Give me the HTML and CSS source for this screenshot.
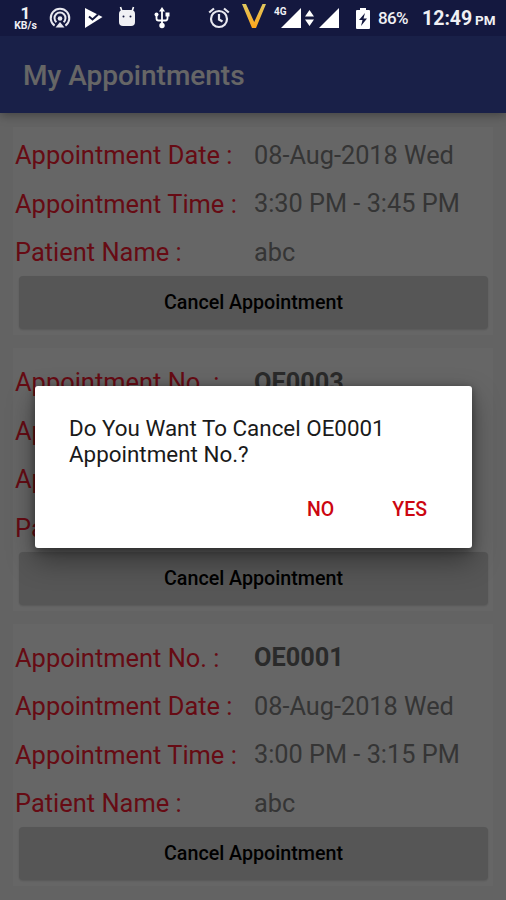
FILE: index.html
```html
<!DOCTYPE html>
<html lang="en">
<head>
    <meta charset="UTF-8">
    <meta name="viewport" content="width=device-width, initial-scale=1.0">
    <title>My Appointments</title>
    <link rel="stylesheet" href="styles.css">
</head>
<body>
    <div class="status-bar">
        <div class="speed">
            <span class="speed-value">1</span>
            <span class="speed-unit">KB/s</span>
        </div>
        <svg class="icon-cast" width="22" height="22" viewBox="0 0 22 22" fill="none" stroke="#e8e8f0" stroke-width="2">
            <path d="M5.600 18.600a9.300 9.300 0 1 1 10.800 0"/>
            <path d="M7.400 15.200a5.500 5.500 0 1 1 7.200 0"/>
            <circle cx="11" cy="11.500" r="2.300" fill="#e8e8f0" stroke="none"/>
            <path d="M6.500 20.500 11 15l4.500 5.500z" fill="#e8e8f0" stroke="none"/>
        </svg>
        <svg class="icon-play" width="19" height="20" viewBox="0 0 19 20">
            <path d="M1 0 18.500 9 1 20z" fill="#fff"/>
            <path d="M5 8.500 8.500 11.500 14 6.500" fill="none" stroke="#14183f" stroke-width="2"/>
        </svg>
        <svg class="icon-android" width="18" height="21" viewBox="0 0 18 21">
            <path d="M2.500 1 4 5.500M15.500 1 14 5.500" stroke="#fff" stroke-width="1.600"/>
            <path d="M1 8Q1 4 5 4h8q4 0 4 4v8q0 4-4 4H5q-4 0-4-4z" fill="#f0f0f4"/>
            <circle cx="5.500" cy="10.500" r="1" fill="#14183f"/>
            <circle cx="12.500" cy="10.500" r="1" fill="#14183f"/>
        </svg>
        <svg class="icon-usb" width="16" height="22" viewBox="0 0 16 22" fill="none" stroke="#fff" stroke-width="1.800">
            <path d="M8 3v15M2.500 8v3.500q0 2 2 2H8M13.500 7v4q0 2.500-2 2.500H8"/>
            <path d="M8 0 5 4.500h6z" fill="#fff" stroke="none"/>
            <circle cx="2.500" cy="7.500" r="2" fill="#fff" stroke="none"/>
            <path d="M11.500 5.500h4v4h-4z" fill="#fff" stroke="none"/>
            <circle cx="8" cy="18.500" r="2.700" fill="#fff" stroke="none"/>
        </svg>
        <svg class="icon-alarm" width="22" height="22" viewBox="0 0 22 22" fill="none" stroke="#e8e8f0" stroke-width="2.200">
            <circle cx="11" cy="12" r="8"/>
            <path d="M11 7v5.500l3.500 2"/>
            <path d="M1.200 5.500 6 1.500M20.800 5.500 16 1.500"/>
        </svg>
        <svg class="icon-v" width="24" height="26" viewBox="0 0 24 26">
            <defs>
                <linearGradient id="gold" x1="0" y1="0" x2="0" y2="1">
                    <stop offset="0" stop-color="#e0c860"/>
                    <stop offset="1" stop-color="#ffa51a"/>
                </linearGradient>
            </defs>
            <path d="M0 1h4l8.200 18L20.500 1H24L14 25h-4z" fill="url(#gold)"/>
        </svg>
        <div class="network">
            <span class="network-type">4G</span>
            <svg width="20" height="20" viewBox="0 0 20 20"><path d="M20 0v20H0z" fill="#fff"/></svg>
        </div>
        <svg class="icon-data" width="9" height="16" viewBox="0 0 9 16">
            <path d="M4.500 0 9 6.500H0zM4.500 16 9 9.500H0z" fill="#fff"/>
        </svg>
        <svg class="icon-signal" width="20" height="20" viewBox="0 0 20 20"><path d="M20 0v20H0z" fill="#fff"/></svg>
        <svg class="icon-battery" width="14" height="21" viewBox="0 0 14 21">
            <path d="M4 0h6v2h3q1 0 1 1v17q0 1-1 1H1q-1 0-1-1V3q0-1 1-1h3z" fill="#fff"/>
            <path d="M9 5 3 12h3.500L5 18l6-7.500H7.500z" fill="#14183f"/>
        </svg>
        <span class="battery-text">86%</span>
        <span class="clock">12:49</span>
        <span class="clock-suffix">PM</span>
    </div>
    <header class="app-bar">
        <h1 class="title">My Appointments</h1>
    </header>
    <main class="content">
        <div class="list">
            <div class="card card-first">
                <div class="row"><span class="label">Appointment Date :</span><span class="value">08-Aug-2018 Wed</span></div>
                <div class="row"><span class="label">Appointment Time :</span><span class="value">3:30 PM - 3:45 PM</span></div>
                <div class="row"><span class="label">Patient Name :</span><span class="value">abc</span></div>
                <button class="cancel-button">Cancel Appointment</button>
            </div>
            <div class="card">
                <div class="row"><span class="label">Appointment No. :</span><span class="value number">OE0003</span></div>
                <div class="row"><span class="label">Appointment Date :</span></div>
                <div class="row"><span class="label">Appointment Time :</span></div>
                <div class="row"><span class="label">Patient Name :</span></div>
                <button class="cancel-button">Cancel Appointment</button>
            </div>
            <div class="card">
                <div class="row"><span class="label">Appointment No. :</span><span class="value number">OE0001</span></div>
                <div class="row"><span class="label">Appointment Date :</span><span class="value">08-Aug-2018 Wed</span></div>
                <div class="row"><span class="label">Appointment Time :</span><span class="value">3:00 PM - 3:15 PM</span></div>
                <div class="row"><span class="label">Patient Name :</span><span class="value">abc</span></div>
                <button class="cancel-button">Cancel Appointment</button>
            </div>
        </div>
    </main>
    <div class="overlay">
        <div class="dialog">
            <p class="message">Do You Want To Cancel OE0001<br>Appointment No.?</p>
            <div class="actions">
                <button class="dialog-button">NO</button>
                <button class="dialog-button">YES</button>
            </div>
        </div>
    </div>
</body>
</html>
```
FILE: styles.css
```css
* {
    box-sizing: border-box;
}

body {
    margin: 0;
    width: 506px;
    height: 900px;
    display: flex;
    flex-direction: column;
    overflow: hidden;
    font-family: Roboto, sans-serif;
    background-color: #f7f7f7;
}

button {
    border: none;
    font-family: inherit;
    cursor: pointer;
}

/* status bar, stays above the overlay */
.status-bar {
    height: 36px;
    flex: none;
    display: flex;
    align-items: center;
    padding-left: 13px;
    color: #f0f0f4;
    background-color: #14183f;
    position: relative;
    z-index: 3;
}

.speed {
    width: 25px;
    display: flex;
    flex-direction: column;
    align-items: center;
    font-weight: bold;
}

.speed-value {
    font-size: 17px;
    line-height: 14px;
}

.speed-unit {
    font-size: 10.5px;
    line-height: 11px;
}

.icon-cast {
    margin-left: 11px;
}

.icon-play {
    margin-left: 13px;
}

.icon-android {
    margin-left: 15px;
    margin-bottom: 4px;
}

.icon-usb {
    margin-left: 18px;
}

.icon-alarm {
    margin-left: 38px;
}

.icon-v {
    margin-left: 12px;
    margin-bottom: 4px;
}

.network {
    margin-left: 8px;
    width: 27px;
    height: 20px;
    display: flex;
    justify-content: flex-end;
    position: relative;
}

.network-type {
    position: absolute;
    left: 0;
    top: -1px;
    font-size: 10px;
    line-height: 10px;
    font-weight: bold;
}

.icon-data {
    margin-left: 4px;
}

.icon-signal {
    margin-left: 5px;
}

.icon-battery {
    margin-left: 17px;
}

.battery-text {
    margin-left: 8px;
    width: 44px;
    font-size: 17px;
    letter-spacing: -0.6px;
    font-weight: 500;
}

.clock {
    width: 50px;
    font-size: 19.5px;
    font-weight: bold;
}

.clock-suffix {
    margin-left: 3px;
    margin-top: 3px;
    font-size: 13.5px;
    font-weight: bold;
}

.app-bar {
    height: 77px;
    flex: none;
    display: flex;
    align-items: center;
    padding: 1px 0 0 23px;
    background-color: #3f51b5;
    box-shadow: 0 2px 10px rgba(0, 0, 0, 0.35);
    position: relative;
    z-index: 1;
}

.title {
    margin: 0;
    color: white;
    font-size: 28px;
    font-weight: 500;
}

.content {
    flex: 1;
    min-height: 0;
    overflow: hidden;
}

.list {
    padding: 14px 13px 0;
    display: flex;
    flex-direction: column;
    gap: 13px;
}

.card {
    height: 262.7px;
    padding-top: 10px;
    background-color: white;
}

.card-first {
    height: 208px;
    padding-top: 4px;
}

.row {
    height: 48.5px;
    display: flex;
    align-items: center;
    padding-left: 2px;
    font-size: 25.3px;
}

.label {
    width: 239px;
    color: #ff1c34;
    font-size: 25.45px;
}

.value {
    color: #858585;
}

.number {
    color: #6a6a6a;
    font-weight: bold;
}

.cancel-button {
    display: block;
    width: 469px;
    height: 53px;
    margin: -0.5px 0 0 6px;
    color: black;
    background-color: #d6d7d7;
    border-radius: 4px;
    box-shadow: 0 1px 2px rgba(0, 0, 0, 0.15);
    font-size: 19.7px;
    font-weight: 500;
}

.overlay {
    position: absolute;
    top: 0;
    left: 0;
    width: 506px;
    height: 900px;
    padding: 386px 0 0 35px;
    background-color: rgba(0, 0, 0, 0.6);
    z-index: 2;
}

.dialog {
    width: 437px;
    height: 162px;
    padding: 28.5px 34px 0;
    background-color: white;
    border-radius: 3px;
    box-shadow: 0 12px 28px rgba(0, 0, 0, 0.4), 0 2px 8px rgba(0, 0, 0, 0.4);
}

.message {
    margin: 0;
    color: #1a1a1a;
    font-size: 22.4px;
    line-height: 26.6px;
}

.actions {
    display: flex;
    justify-content: flex-end;
    gap: 58px;
    margin-top: 29px;
    padding-right: 11px;
}

.dialog-button {
    padding: 0;
    color: #cc0610;
    background: none;
    font-size: 19.5px;
    line-height: 26px;
    font-weight: 500;
}
```
